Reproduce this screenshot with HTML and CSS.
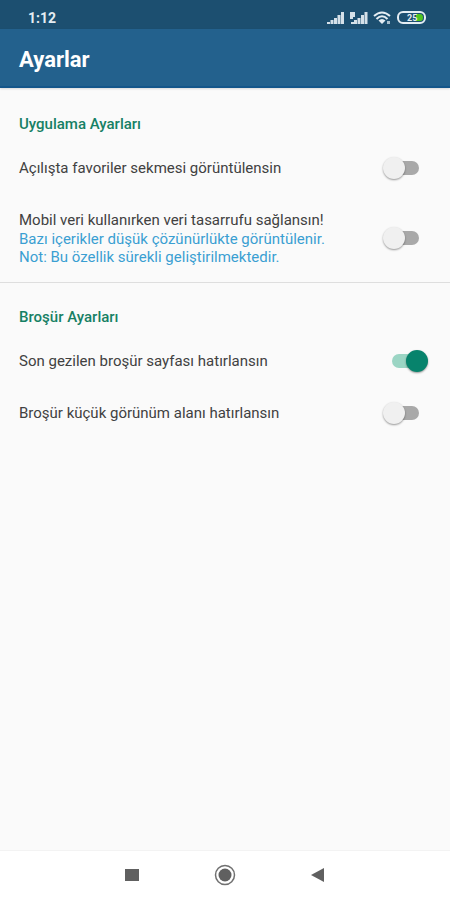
FILE: index.html
```html
<!DOCTYPE html>
<html lang="tr">
<head>
<meta charset="utf-8">
<meta name="viewport" content="width=device-width, initial-scale=1">
<title>Ayarlar</title>
<link rel="stylesheet" href="styles.css">
</head>
<body>
<div class="status-bar">
  <span class="clock">1:12</span>
  <div class="status-icons">
    <svg width="18" height="12" viewBox="0 0 18 12" fill="#d5e1e9" aria-hidden="true"><path d="M0 10h3v2H0zM3.500 8h3v4h-3zM7 6h3v6H7zM10.500 3h3v9h-3zM14 0h3v12h-3z"/></svg>
    <svg width="18" height="12" viewBox="0 0 18 12" fill="#d5e1e9" aria-hidden="true"><path d="M0 0h5v5H3v2H0zM1 10h3v2H1zM4 8h3v4H4zM7.500 6h3v6h-3zM11 3h3v9h-3zM14.500 0h3v12h-3z"/></svg>
    <svg width="19" height="14" viewBox="0 0 19 14" fill="none" stroke="#e4edf3" stroke-width="2" aria-hidden="true"><path d="M1 5Q9 -2 17 5M3.500 8Q9 2.500 14.500 8"/><path d="M5.500 9.500Q9 6.500 12.500 9.500L9 13z" fill="#e4edf3" stroke="none"/><path d="M14 10h3v3h-3z" fill="#a9c0cf" stroke="none"/></svg>
    <svg width="30" height="13" viewBox="0 0 30 13" aria-hidden="true"><rect x="1" y="1" width="27" height="11" rx="5" fill="#1c4f70" stroke="#e4edf3" stroke-width="2"/><path d="M19 3h4q3 0 3 3.500T23 10h-4z" fill="#4fc421"/><text x="10" y="10" class="battery-level">25</text></svg>
  </div>
</div>
<header class="app-bar"><h1>Ayarlar</h1></header>
<main>
  <section>
    <h2>Uygulama Ayarları</h2>
    <label class="row">
      <span>Açılışta favoriler sekmesi görüntülensin</span>
      <input type="checkbox" role="switch" class="switch">
    </label>
    <label class="row row-tall">
      <span>Mobil veri kullanırken veri tasarrufu sağlansın!
        <span class="note">Bazı içerikler düşük çözünürlükte görüntülenir.<br>Not: Bu özellik sürekli geliştirilmektedir.</span>
      </span>
      <input type="checkbox" role="switch" class="switch">
    </label>
  </section>
  <section>
    <h2>Broşür Ayarları</h2>
    <label class="row">
      <span>Son gezilen broşür sayfası hatırlansın</span>
      <input type="checkbox" role="switch" class="switch" checked>
    </label>
    <label class="row">
      <span>Broşür küçük görünüm alanı hatırlansın</span>
      <input type="checkbox" role="switch" class="switch">
    </label>
  </section>
</main>
<nav class="nav-bar">
  <button type="button" aria-label="Son uygulamalar"><svg width="22" height="22" viewBox="0 0 22 22"><path d="M4 5h14v12H4z" fill="#606060"/></svg></button>
  <button type="button" aria-label="Ana ekran"><svg width="22" height="22" viewBox="0 0 22 22"><circle cx="11" cy="11" r="9.500" fill="none" stroke="#707070" stroke-width="1.500"/><circle cx="11" cy="11" r="6.500" fill="#606060"/></svg></button>
  <button type="button" aria-label="Geri"><svg width="22" height="22" viewBox="0 0 22 22"><path d="M4 11L17 4v14z" fill="#606060"/></svg></button>
</nav>
</body>
</html>
```
FILE: styles.css
```css
* { box-sizing: border-box; }
body {
  margin: 0;
  min-height: 100vh;
  display: flex;
  flex-direction: column;
  background: #fafafa;
  color: #414141;
  font: 15px/20px Roboto, sans-serif;
}
.status-bar {
  display: flex;
  align-items: center;
  justify-content: space-between;
  height: 29px;
  padding: 6px 23px 0 28px;
  background: #1c4f70;
}
.clock {
  color: #e4edf3;
  font-size: 14px;
  font-weight: 700;
}
.status-icons {
  display: flex;
  align-items: center;
  gap: 5px;
}
.battery-level {
  fill: #e4edf3;
  font-size: 9px;
  font-weight: 700;
}
.app-bar {
  display: flex;
  align-items: center;
  height: 59px;
  padding: 4px 19px 0;
  background: #23618d;
  border-bottom: 2px solid #14568a;
  box-shadow: 0 1px 2px #00000022;
}
h1 {
  margin: 0;
  color: #fff;
  font-size: 22px;
  line-height: 28px;
  font-weight: 700;
}
main { flex: 1; }
section { padding: 26px 22px 0 19px; }
section + section {
  padding-top: 24px;
  border-top: 1px solid #dedede;
}
h2 {
  margin: 0 0 8px;
  color: #168064;
  font-size: 15px;
  line-height: 20px;
  font-weight: 500;
}
.row {
  display: flex;
  align-items: center;
  justify-content: space-between;
  min-height: 52px;
}
.row-tall { min-height: 88px; }
.note {
  display: block;
  color: #3a9fd2;
  line-height: 18px;
}
.switch {
  appearance: none;
  position: relative;
  flex: none;
  width: 45px;
  height: 24px;
  margin: 0;
}
.switch::before {
  content: "";
  position: absolute;
  inset: 5px 9px;
  border-radius: 7px;
  background: #a9a9a9;
}
.switch::after {
  content: "";
  position: absolute;
  top: 1px;
  left: 0;
  width: 22px;
  height: 22px;
  border-radius: 50%;
  background: #f0f0f0;
  box-shadow: 0 1px 2px #00000066;
}
.switch:checked::before { background: #9bd5c4; }
.switch:checked::after {
  left: auto;
  right: 0;
  background: #07836c;
}
.nav-bar {
  display: flex;
  align-items: center;
  justify-content: center;
  gap: 71px;
  height: 50px;
  padding-bottom: 2px;
  background: #fff;
  border-top: 1px solid #f3f3f3;
}
.nav-bar button {
  display: flex;
  padding: 0;
  border: 0;
  background: none;
}
```
